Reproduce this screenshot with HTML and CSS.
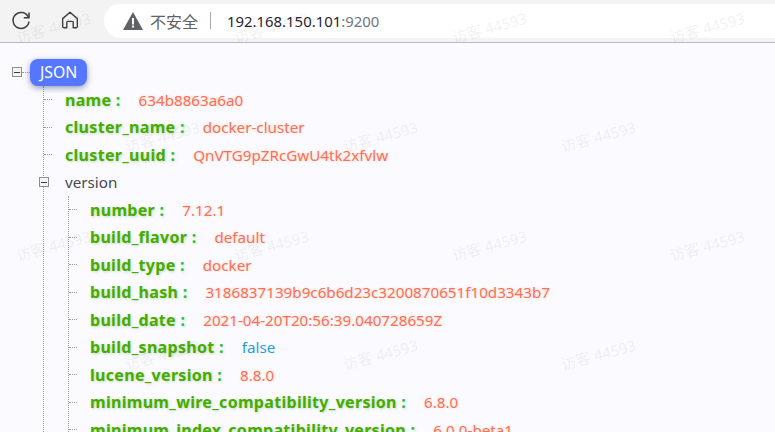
FILE: index.html
```html
<!DOCTYPE html>
<html lang="zh-CN">
<head>
<meta charset="utf-8">
<title>192.168.150.101:9200</title>
<link rel="stylesheet" href="styles.css">
</head>
<body>
<header class="toolbar">
  <button class="tool tool-reload" aria-label="reload">
    <svg viewBox="0 0 24 24" width="24" height="24" fill="none" stroke="#3c3c3c" stroke-width="1.5"><path d="M19.4 9.2A8 8 0 1 0 20 13.5"/><path d="M20 4.5v5.2h-5.2" stroke-linejoin="miter"/></svg>
  </button>
  <button class="tool tool-home" aria-label="home">
    <svg viewBox="0 0 24 24" width="22" height="22" fill="none" stroke="#3c3c3c" stroke-width="1.5" stroke-linejoin="round"><path d="M4 10.5 12 3.5l8 7v8.5a1.5 1.5 0 0 1-1.500 1.500H15.500v-6a1 1 0 0 0-1-1h-5a1 1 0 0 0-1 1v6H5.500A1.500 1.500 0 0 1 4 19z"/></svg>
  </button>
  <div class="omnibox">
    <svg class="warn" viewBox="0 0 20 18" width="20" height="18"><path d="M10 0 20 18H0z" fill="#5f6368"/><rect x="9" y="6" width="2" height="6.500" fill="#fff"/><rect x="9" y="13.500" width="2" height="2" fill="#fff"/></svg>
    <span class="insecure">不安全</span>
    <span class="sep"></span>
    <span class="url">192.168.150.101<span class="port">:9200</span></span>
  </div>
</header>
<main class="page">
  <div class="root-row">
    <span class="expander"></span>
    <span class="stub"></span>
    <span class="root-badge">JSON</span>
  </div>
  <ul class="tree">
    <li class="row"><span class="tick"></span><span class="key">name <b class="colon">:</b></span><span class="val str">634b8863a6a0</span></li>
    <li class="row"><span class="tick"></span><span class="key">cluster_name <b class="colon">:</b></span><span class="val str">docker-cluster</span></li>
    <li class="row"><span class="tick"></span><span class="key">cluster_uuid <b class="colon">:</b></span><span class="val str">QnVTG9pZRcGwU4tk2xfvlw</span></li>
    <li class="row row-branch"><span class="expander"></span><span class="branch">version</span></li>
    <li>
      <ul class="tree">
        <li class="row"><span class="tick"></span><span class="key">number <b class="colon">:</b></span><span class="val str">7.12.1</span></li>
        <li class="row"><span class="tick"></span><span class="key">build_flavor <b class="colon">:</b></span><span class="val str">default</span></li>
        <li class="row"><span class="tick"></span><span class="key">build_type <b class="colon">:</b></span><span class="val str">docker</span></li>
        <li class="row"><span class="tick"></span><span class="key">build_hash <b class="colon">:</b></span><span class="val str">3186837139b9c6b6d23c3200870651f10d3343b7</span></li>
        <li class="row"><span class="tick"></span><span class="key">build_date <b class="colon">:</b></span><span class="val str">2021-04-20T20:56:39.040728659Z</span></li>
        <li class="row"><span class="tick"></span><span class="key">build_snapshot <b class="colon">:</b></span><span class="val bool">false</span></li>
        <li class="row"><span class="tick"></span><span class="key">lucene_version <b class="colon">:</b></span><span class="val str">8.8.0</span></li>
        <li class="row"><span class="tick"></span><span class="key">minimum_wire_compatibility_version <b class="colon">:</b></span><span class="val str">6.8.0</span></li>
        <li class="row"><span class="tick"></span><span class="key">minimum_index_compatibility_version <b class="colon">:</b></span><span class="val str">6.0.0-beta1</span></li>
      </ul>
    </li>
  </ul>
</main>
<div class="watermarks" aria-hidden="true">
  <div class="wm-row"><span class="wm">访客 44593</span><span class="wm">访客 44593</span><span class="wm">访客 44593</span><span class="wm">访客 44593</span></div>
  <div class="wm-row wm-offset"><span class="wm">访客 44593</span><span class="wm">访客 44593</span><span class="wm">访客 44593</span></div>
  <div class="wm-row"><span class="wm">访客 44593</span><span class="wm">访客 44593</span><span class="wm">访客 44593</span><span class="wm">访客 44593</span></div>
  <div class="wm-row wm-offset"><span class="wm">访客 44593</span><span class="wm">访客 44593</span><span class="wm">访客 44593</span></div>
</div>
</body>
</html>
```
FILE: styles.css
```css
* { box-sizing: border-box; }
html, body { margin: 0; height: 100%; }
body {
  position: relative;
  overflow: hidden;
  background: #fbfbff;
  font-family: "Noto Sans", "Noto Sans CJK SC", sans-serif;
  font-size: 15.2px;
}
.toolbar {
  display: flex;
  align-items: center;
  height: 43px;
  background: #f3f3f3;
  border-bottom: 1px solid #b9b9bd;
  padding: 0 0 3px 9px;
}
.tool {
  display: flex;
  padding: 0;
  border: 0;
  background: none;
}
.tool-reload { margin-right: 26px; }
.tool-home { margin-right: 23px; }
.omnibox {
  flex: 1;
  display: flex;
  align-items: center;
  height: 34px;
  margin-top: 2px;
  background: #fff;
  border-radius: 17px 0 0 17px;
  padding-left: 19px;
}
.warn { margin-right: 7px; }
.insecure { color: #5f6368; font-size: 16px; }
.sep { width: 1px; height: 17px; background: #a8a8a8; margin: 0 16px 0 12px; }
.url { color: #1f2330; font-size: 14.9px; }
.port { color: #70757a; }
.page {
  padding: 14px 0 0 12px;
  color: #454a55;
}
.root-row { display: flex; align-items: center; height: 30px; }
.expander {
  flex: none;
  width: 10px;
  height: 10px;
  border: 1px solid #8d8d8d;
  background: linear-gradient(#3c3c3c, #3c3c3c) center / 6px 1px no-repeat #f4f4f4;
}
.stub { width: 8px; border-top: 1px dotted #999; }
.root-badge {
  padding: 0 10px;
  height: 27px;
  line-height: 26px;
  font-size: 15.8px;
  border-radius: 8px;
  background: #5577ff;
  color: #fff;
  box-shadow: 0 2px 6px rgba(50, 60, 110, .5);
}
.tree {
  list-style: none;
  margin: 0 0 0 31px;
  padding: 0;
  border-left: 1px dotted #999;
}
.tree .tree { margin-left: 24px; }
.page > .tree { margin-top: -1px; }
.row { display: flex; align-items: center; height: 27.5px; white-space: nowrap; }
.tick { flex: none; width: 8px; border-top: 1px dotted #999; margin-right: 13px; }
.key {
  font-size: 16px;
  font-weight: 700;
  letter-spacing: .3px;
  color: #44ad00;
  text-shadow: 1px 1px 3px rgba(60, 120, 30, .28);
}
.colon { color: #1fc23a; font-weight: 700; }
.val { margin-left: 18px; }
.str { color: #ff6f50; text-shadow: 0 0 3px rgba(255, 150, 120, .35); }
.bool { color: #1e9fdc; }
.row-branch { margin-left: -5px; }
.branch { margin-left: 16px; }
.watermarks {
  position: absolute;
  inset: 0;
  pointer-events: none;
  display: flex;
  flex-direction: column;
  padding-top: 14px;
  gap: 80px;
}
.wm-row { display: flex; gap: 146px; padding-left: 15px; height: 29px; }
.wm-offset { padding-left: 124px; }
.wm {
  flex: none;
  width: 72px;
  white-space: nowrap;
  color: rgba(120, 120, 130, .11);
  font-size: 15px;
  line-height: 29px;
  transform: rotate(-15deg);
}
```
